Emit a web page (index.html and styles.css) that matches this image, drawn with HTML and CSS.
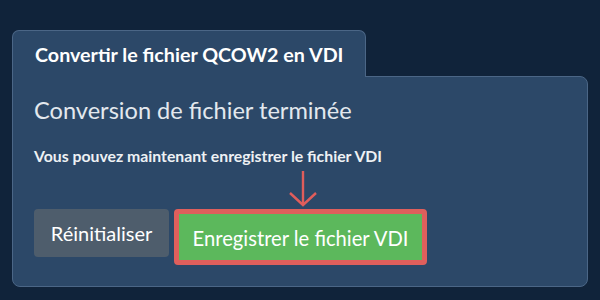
FILE: index.html
```html
<!DOCTYPE html>
<html lang="fr">
<head>
<meta charset="utf-8">
<link rel="stylesheet" href="styles.css">
</head>
<body>
<div class="wrap">
  <div class="tab">Convertir le fichier QCOW2 en VDI</div>
  <div class="panel">
    <h2 class="title">Conversion de fichier terminée</h2>
    <p class="msg">Vous pouvez maintenant enregistrer le fichier VDI</p>
    <div class="actions">
      <button class="btn btn-reset">Réinitialiser</button>
      <div class="highlight">
        <svg class="arrow" width="30" height="38" viewBox="0 0 30 38">
          <path d="M15 1 V35 M2 23 L15 35 L28 23" fill="none" stroke="#e05d5b" stroke-width="2.4"/>
        </svg>
        <button class="btn btn-save">Enregistrer le fichier VDI</button>
      </div>
    </div>
  </div>
</div>
</body>
</html>
```
FILE: styles.css
```css
* { box-sizing: border-box; }
html, body { margin: 0; padding: 0; }
body {
  background: #10233a;
  font-family: Lato, "Open Sans", sans-serif;
  width: 600px;
  height: 300px;
  overflow: hidden;
}
.wrap {
  padding: 30px 12px 0 12px;
}
.tab {
  position: relative;
  z-index: 1;
  width: 354px;
  height: 47px;
  margin-bottom: -1px;
  background: #2c4868;
  border: 1px solid #4b6686;
  border-bottom: none;
  border-radius: 7px 7px 0 0;
  color: #ffffff;
  font-weight: 700;
  font-size: 19.7px;
  line-height: 24px;
  padding: 12px 0 0 22px;
}
.panel {
  background: #2c4868;
  border: 1px solid #4b6686;
  border-radius: 0 8px 8px 8px;
  height: 211px;
  padding: 18px 20px 0 21px;
}
.title {
  margin: 0;
  font-weight: 400;
  font-size: 23.6px;
  color: #e3e8ee;
  line-height: 30px;
}
.msg {
  margin: 22px 0 0 0;
  font-weight: 700;
  font-size: 15.8px;
  color: #eef1f4;
  line-height: 18px;
}
.actions {
  display: flex;
  align-items: flex-start;
  gap: 5px;
  margin-top: 44px;
}
.btn {
  border: none;
  font-family: Lato, "Open Sans", sans-serif;
  color: #ffffff;
  cursor: pointer;
}
.btn-reset {
  background: #4e5d6c;
  border-radius: 4px;
  width: 135px;
  height: 48px;
  font-size: 20px;
  padding: 0;
}
.highlight {
  position: relative;
  border: 5px solid #df5f5c;
  border-radius: 4px;
  background: #5cb85c;
}
.arrow {
  position: absolute;
  left: 109px;
  top: -44px;
}
.btn-save {
  display: block;
  background: #5cb85c;
  width: 243px;
  height: 46px;
  font-size: 20.2px;
  padding: 2px 0 0 0;
}
```
